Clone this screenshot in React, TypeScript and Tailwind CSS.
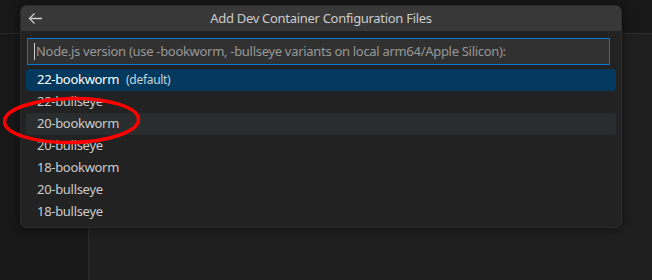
interface Item {
  label: string
  description?: string
  state?: 'selected' | 'hover'
}

const items: Item[] = [
  { label: '22-bookworm', description: '(default)', state: 'selected' },
  { label: '22-bullseye' },
  { label: '20-bookworm', state: 'hover' },
  { label: '20-bullseye' },
  { label: '18-bookworm' },
  { label: '20-bullseye' },
  { label: '18-bullseye' },
]

function Row({ item }: { item: Item }) {
  const bg =
    item.state === 'selected'
      ? 'bg-[#04395e] text-white'
      : item.state === 'hover'
        ? 'bg-[#2a2d2e] text-[#cccccc]'
        : 'text-[#cccccc]'
  return (
    <div className={`flex h-[22px] items-center gap-[7px] rounded-[3px] pl-[11px] ${bg}`}>
      <span className="text-[13px]">{item.label}</span>
      {item.description && (
        <span className="text-[12px] text-[#c5d3de]">{item.description}</span>
      )}
    </div>
  )
}

export default function App() {
  return (
    <div
      className="relative flex h-[280px] w-[652px] flex-col overflow-hidden bg-[#1f1f1f] tracking-[-0.3px]"
      style={{ fontFamily: '"Noto Sans", "Open Sans", sans-serif' }}
    >
      <div className="h-[34px] shrink-0 border-b border-[#2b2b2b] bg-[#181818]" />
      <div className="flex flex-1">
        <div className="w-[89px] border-r border-[#2b2b2b] bg-[#181818]" />
        <div className="flex-1 bg-[#1f1f1f]" />
      </div>

      {/* quick pick */}
      <div className="absolute top-[5px] left-[20px] flex h-[223px] w-[602px] flex-col overflow-hidden rounded-[6px] border border-[#2b2b2b] bg-[#222222] shadow-[0_0_8px_2px_rgba(0,0,0,0.36)]">
        <div className="relative flex h-[25px] shrink-0 items-center justify-center bg-[#383838]">
          <svg
            className="absolute top-0 left-0"
            width="30"
            height="25"
            viewBox="0 0 30 25"
            fill="none"
            stroke="#cccccc"
            strokeWidth="1.3"
          >
            <path d="M8.5 12.5 H21" />
            <path d="M13.5 7.5 L8.5 12.5 L13.5 17.5" />
          </svg>
          <span className="text-[13px] text-[#cccccc]">
            Add Dev Container Configuration Files
          </span>
        </div>
        <div className="pt-[7px] pr-[11px] pl-[6px]">
          <div className="flex h-[27px] items-center border border-[#0078d4] bg-[#313131] pl-[6px]">
            <span className="mr-[1px] h-[17px] w-px bg-[#cccccc]" />
            <span className="text-[13px] whitespace-nowrap text-[#989898]">
              Node.js version (use -bookworm, -bullseye variants on local arm64/Apple Silicon):
            </span>
          </div>
        </div>
        <div className="flex flex-col px-[5px] pt-[4px]">
          {items.map((item, i) => (
            <Row key={i} item={item} />
          ))}
        </div>
      </div>

      {/* annotation */}
      <svg
        className="pointer-events-none absolute top-0 left-0"
        width="652"
        height="280"
        viewBox="0 0 652 280"
      >
        <ellipse
          cx="71.5"
          cy="120.5"
          rx="67"
          ry="22"
          fill="none"
          stroke="#ff0000"
          strokeWidth="3.5"
          transform="rotate(-1 71.5 120.5)"
        />
      </svg>
    </div>
  )
}
